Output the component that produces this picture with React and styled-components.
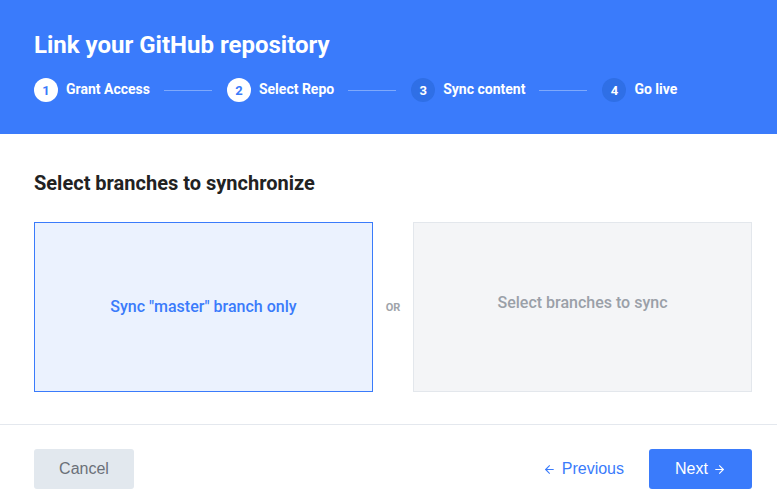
import React, { useState } from 'react';
import styled, { createGlobalStyle } from 'styled-components';
import { ArrowLeft, ArrowRight } from 'lucide-react';

const GlobalStyle = createGlobalStyle`
  * { box-sizing: border-box; }
  body {
    margin: 0;
    background: #fff;
    font-family: Roboto, "Noto Sans", sans-serif;
  }
`;

const Header = styled.div`
  background: #3a7bfb;
  height: 134px;
  padding: 31px 25px 0 34px;
`;

const Title = styled.h1`
  margin: 0;
  font-size: 24px;
  line-height: 28px;
  font-weight: 700;
  color: #fff;
`;

const Steps = styled.div`
  display: flex;
  align-items: center;
  margin-top: 19px;
`;

const Step = styled.div`
  display: flex;
  align-items: center;
  gap: 8px;
`;

const Circle = styled.span`
  width: 24px;
  height: 24px;
  border-radius: 50%;
  display: flex;
  align-items: center;
  justify-content: center;
  font-size: 13px;
  font-weight: 700;
  background: ${p => (p.$done ? '#fff' : '#2f6fe6')};
  color: ${p => (p.$done ? '#3a7bfb' : '#fff')};
`;

const StepLabel = styled.span`
  color: #fff;
  font-size: 14px;
  font-weight: 700;
  margin-top: -3px;
`;

const Line = styled.span`
  width: 48px;
  height: 1px;
  margin: 0 15px 0 14px;
  background: rgba(255, 255, 255, 0.35);
`;

const Body = styled.div`
  padding: 37px 25px 32px 34px;
`;

const SectionTitle = styled.h2`
  margin: 0;
  font-size: 20px;
  line-height: 24px;
  font-weight: 700;
  color: #222;
`;

const Options = styled.div`
  display: flex;
  margin-top: 27px;
`;

const Option = styled.button`
  flex: 1;
  height: 170px;
  display: flex;
  align-items: center;
  justify-content: center;
  padding: ${p => (p.$active ? '0 0 2px' : '0 0 10px')};
  font-family: Roboto, sans-serif;
  font-size: 16px;
  font-weight: 500;
  cursor: pointer;
  border: 1px solid ${p => (p.$active ? '#3a7bfb' : '#e3e7ec')};
  background: ${p => (p.$active ? '#ebf2fe' : '#f4f5f7')};
  color: ${p => (p.$active ? '#3a7bfb' : '#9aa0a8')};
`;

const Or = styled.div`
  width: 40px;
  display: flex;
  align-items: center;
  justify-content: center;
  font-size: 11px;
  font-weight: 700;
  color: #a0a4aa;
`;

const Footer = styled.div`
  border-top: 1px solid #e4e8ee;
  padding: 24px 25px 13px 34px;
  display: flex;
  align-items: center;
`;

const CancelButton = styled.button`
  width: 100px;
  height: 40px;
  border: none;
  border-radius: 3px;
  background: #e2e8ee;
  color: #6b7078;
  font-family: "Liberation Sans", Arial, sans-serif;
  font-size: 16px;
`;

const Spacer = styled.div`
  flex: 1;
`;

const PrevLink = styled.button`
  display: flex;
  align-items: center;
  gap: 6px;
  border: none;
  background: none;
  padding: 0;
  margin-right: 25px;
  color: #3a7bfb;
  font-family: "Liberation Sans", Arial, sans-serif;
  font-size: 16px;
  cursor: pointer;
`;

const NextButton = styled.button`
  width: 103px;
  height: 40px;
  border: none;
  border-radius: 3px;
  background: #3a7bfb;
  color: #fff;
  display: flex;
  align-items: center;
  justify-content: center;
  gap: 5px;
  font-family: "Liberation Sans", Arial, sans-serif;
  font-size: 16px;
  cursor: pointer;
`;

const steps = ['Grant Access', 'Select Repo', 'Sync content', 'Go live'];

export default function App() {
  const [choice, setChoice] = useState('master');

  return (
    <>
      <GlobalStyle />
      <Header>
        <Title>Link your GitHub repository</Title>
        <Steps>
          {steps.map((s, i) => (
            <React.Fragment key={s}>
              <Step>
                <Circle $done={i < 2}>{i + 1}</Circle>
                <StepLabel>{s}</StepLabel>
              </Step>
              {i < steps.length - 1 && <Line />}
            </React.Fragment>
          ))}
        </Steps>
      </Header>
      <Body>
        <SectionTitle>Select branches to synchronize</SectionTitle>
        <Options>
          <Option $active={choice === 'master'} onClick={() => setChoice('master')}>
            Sync "master" branch only
          </Option>
          <Or>OR</Or>
          <Option $active={choice === 'select'} onClick={() => setChoice('select')}>
            Select branches to sync
          </Option>
        </Options>
      </Body>
      <Footer>
        <CancelButton>Cancel</CancelButton>
        <Spacer />
        <PrevLink>
          <ArrowLeft size={13} strokeWidth={2} />
          Previous
        </PrevLink>
        <NextButton>
          Next
          <ArrowRight size={13} strokeWidth={2} />
        </NextButton>
      </Footer>
    </>
  );
}
